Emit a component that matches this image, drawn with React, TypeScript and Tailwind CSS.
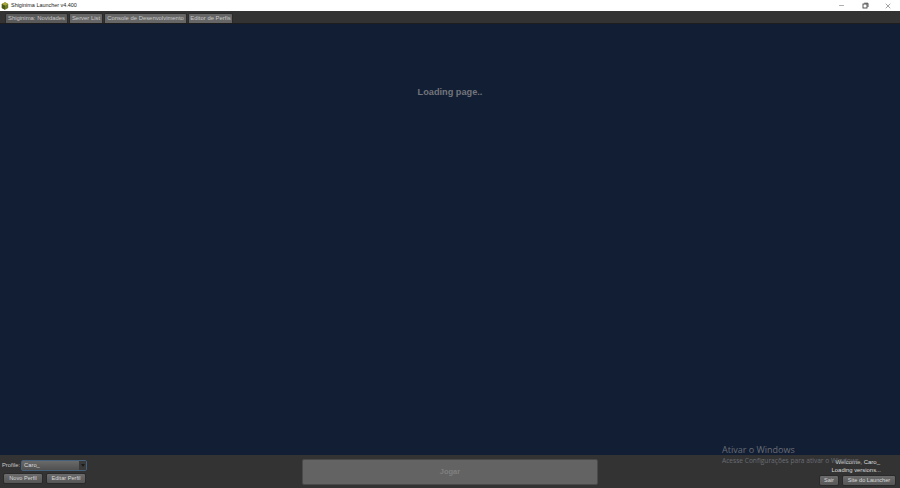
import { Minus, X } from "lucide-react";

const tabs = ["Shiginima: Novidades", "Server List", "Console de Desenvolvimento", "Editor de Perfis"];

const Btn = ({ label, className }: { label: string; className: string }) => (
  <button className={`flex h-[11px] items-center justify-center rounded-[2px] border border-[#2a2a2a] bg-gradient-to-b from-[#6c6c6c] to-[#565656] text-[5.6px] leading-none text-[#d8d8d8] ${className}`}>
    {label}
  </button>
);

const App = () => {
  return (
    <div className="relative flex h-[488px] w-[900px] flex-col overflow-hidden bg-[#333333] font-['Liberation_Sans',sans-serif]">
      {/* Title bar */}
      <div className="flex h-[11px] items-center bg-white pl-[1px] text-[5.45px] leading-none text-[#222222]">
        <svg width="8" height="8" viewBox="0 0 7 8" className="mr-[2px]">
          <path d="M3.5 0.3 6.7 2v4L3.5 7.7.3 6V2z" fill="#6d7a24" />
          <path d="M3.5 0.3 6.7 2 3.5 3.8.3 2z" fill="#a8a838" />
          <path d="M3.5 3.8V7.7L.3 6V2z" fill="#4a5a1c" />
        </svg>
        <span>Shiginima Launcher v4.400</span>
        <div className="ml-auto flex items-center text-[#444444]">
          <Minus size={7} strokeWidth={1.5} className="mr-[17px]" />
          <svg width="7" height="7" viewBox="0 0 7 7" className="mr-[15px]" fill="none" stroke="#444444" strokeWidth="0.9">
            <rect x="1" y="2" width="4" height="4" />
            <path d="M2.2 1.2H6V5" />
          </svg>
          <X size={8} strokeWidth={1.5} className="mr-[8px]" />
        </div>
      </div>

      {/* Tabs */}
      <div className="flex h-[13px] items-start gap-[1px] border-b border-[#1e1e1e] pt-[2px] pl-[5px]">
        {tabs.map((tab, i) => (
          <div
            key={tab}
            className={`flex h-[10px] items-center justify-center rounded-t-[2px] border border-b-0 border-[#2a2a2a] text-[5.9px] leading-none text-[#c8c8c8] ${i === 0 ? "w-[63px] bg-[#5a5a5a]" : i === 1 ? "w-[34px] bg-[#666666]" : i === 2 ? "w-[83px] bg-[#666666]" : "w-[45px] bg-[#666666]"}`}
          >
            {tab}
          </div>
        ))}
      </div>

      {/* Page */}
      <main className="flex flex-1 justify-center bg-[#121e34] pt-[62px]">
        <p className="text-[9.2px] leading-[12px] font-bold text-[#72757b]">Loading page..</p>
      </main>

      {/* Bottom panel */}
      <div className="flex h-[33px] items-start bg-[#333333]">
        <div className="flex w-[302px] flex-col gap-[2px] pt-[5px] pl-[2px]">
          <div className="flex items-center gap-[1px]">
            <span className="text-[5.8px] leading-none text-[#c8c8c8]">Profile:</span>
            <div className="flex h-[11px] w-[66px] items-center justify-between rounded-[2px] border border-[#46617c] bg-gradient-to-b from-[#6a6a6a] to-[#505050] pl-[2px] text-[5.8px] leading-none text-[#dddddd]">
              <span>Caro_</span>
              <span className="flex h-full w-[7px] items-center justify-center bg-[#3a3a3a]">
                <span className="h-0 w-0 border-x-[2px] border-t-[3px] border-x-transparent border-t-[#1c1c1c]" />
              </span>
            </div>
          </div>
          <div className="flex gap-[3px] pl-[1px]">
            <Btn label="Novo Perfil" className="w-[40px]" />
            <Btn label="Editar Perfil" className="w-[40px]" />
          </div>
        </div>

        <button className="mt-[4px] flex h-[26px] w-[296px] items-center justify-center rounded-[2px] border border-[#4a4a4a] bg-[#636363] text-[7.5px] font-bold leading-none text-[#808080]">
          Jogar
        </button>

        <div className="flex flex-1 flex-col items-end pt-[4px] pr-[4px]">
          <span className="mr-[16px] text-[6px] leading-[7px] text-[#dddddd]">Welcome, Caro_</span>
          <span className="mr-[15px] text-[5.9px] leading-[8px] text-[#dddddd]">Loading versions...</span>
          <div className="mt-[1px] flex gap-[3px]">
            <Btn label="Sair" className="w-[20px]" />
            <Btn label="Site do Launcher" className="w-[54px]" />
          </div>
        </div>
      </div>

      {/* Windows activation watermark */}
      <div className="pointer-events-none absolute top-[444px] left-[722px] font-['Open_Sans',sans-serif] text-[#6a6d74]">
        <p className="text-[9px] leading-[12px]">Ativar o Windows</p>
        <p className="text-[6.6px] leading-[10px] whitespace-nowrap">Acesse Configurações para ativar o Windows.</p>
      </div>
    </div>
  );
};

export default App;
